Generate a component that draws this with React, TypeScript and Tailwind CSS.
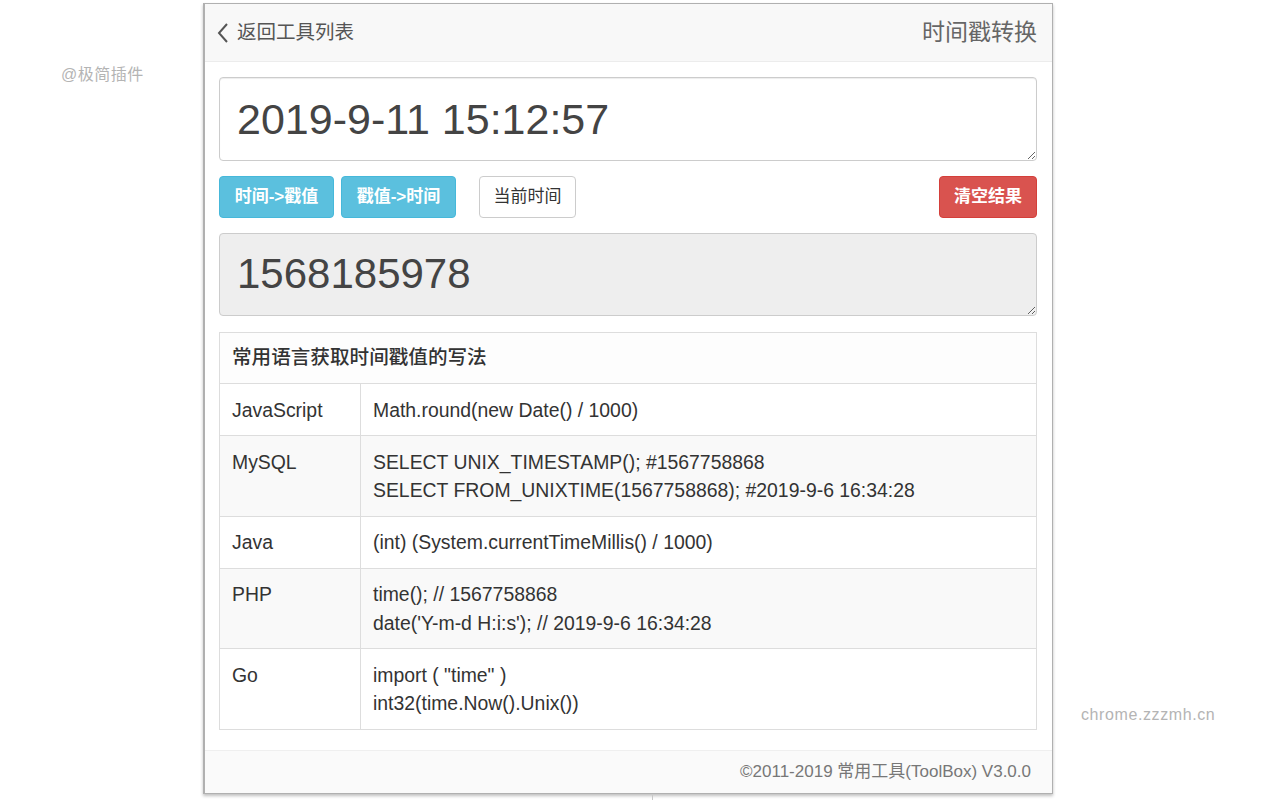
import React from "react";

const rows: { lang: string; code: string[]; striped: boolean }[] = [
  { lang: "JavaScript", code: ["Math.round(new Date() / 1000)"], striped: false },
  {
    lang: "MySQL",
    code: ["SELECT UNIX_TIMESTAMP(); #1567758868", "SELECT FROM_UNIXTIME(1567758868); #2019-9-6 16:34:28"],
    striped: true,
  },
  { lang: "Java", code: ["(int) (System.currentTimeMillis() / 1000)"], striped: false },
  { lang: "PHP", code: ["time(); // 1567758868", "date('Y-m-d H:i:s'); // 2019-9-6 16:34:28"], striped: true },
  { lang: "Go", code: ['import ( "time" )', "int32(time.Now().Unix())"], striped: false },
];

const font = { fontFamily: '"Liberation Sans", "Noto Sans CJK SC", Arial, sans-serif' };

export default function App() {
  return (
    <div className="relative w-[1280px] h-[800px] bg-white overflow-hidden" style={font}>
      <div className="absolute left-[61px] top-[63px] text-[16px] tracking-[0.5px] text-[#b4b4b4]">@极简插件</div>
      <div className="absolute left-[1081px] top-[703px] text-[16px] tracking-[0.6px] text-[#b4b4b4]">chrome.zzzmh.cn</div>
      <div className="absolute left-[652px] top-[795px] w-px h-[5px] bg-[#c8c8c8]" />

      <div className="ml-[203px] pt-[3px]">
        <div className="w-[850px] h-[791px] flex flex-col border border-[#b0b0b0] border-l-2 shadow-[0_2px_3px_rgba(0,0,0,0.25)] bg-white">
          {/* header */}
          <div className="h-[58px] flex items-center justify-between bg-[#f8f8f8] border-b border-[#ececec] pl-[11px] pr-[15px]">
            <div className="flex items-center text-[19.5px] text-[#555]">
              <svg width="14" height="22" viewBox="0 0 14 22" className="mr-[7px]">
                <path d="M11 2 L3 11 L11 20" fill="none" stroke="#555" strokeWidth="2" />
              </svg>
              返回工具列表
            </div>
            <div className="text-[23px] text-[#666]">时间戳转换</div>
          </div>

          {/* body */}
          <div className="flex-1 pl-[14px] pr-[15px] pt-[15px]">
            <textarea
              readOnly
              value="2019-9-11 15:12:57"
              className="block w-full h-[84px] rounded-[4px] border border-[#cccccc] bg-white px-[17px] py-[15px] text-[43px] leading-[52px] text-[#444] outline-none shadow-[inset_0_1px_1px_rgba(0,0,0,0.075)]"
              style={font}
            />
            <div className="mt-[15px] h-[42px] flex items-center">
              <button className="h-[42px] w-[115px] rounded-[4px] bg-[#5bc0de] border border-[#46b8da] text-white text-[17px] font-bold">
                时间-&gt;戳值
              </button>
              <button className="ml-[7px] h-[42px] w-[115px] rounded-[4px] bg-[#5bc0de] border border-[#46b8da] text-white text-[17px] font-bold">
                戳值-&gt;时间
              </button>
              <button className="ml-[23px] h-[42px] w-[97px] rounded-[4px] bg-white border border-[#cccccc] text-[#333] text-[17px]">
                当前时间
              </button>
              <div className="flex-1" />
              <button className="h-[42px] w-[98px] rounded-[4px] bg-[#d9534f] border border-[#d43f3a] text-white text-[17px] font-bold">
                清空结果
              </button>
            </div>
            <textarea
              readOnly
              value="1568185978"
              className="mt-[15px] block w-full h-[83px] rounded-[4px] border border-[#cccccc] bg-[#eeeeee] px-[17px] py-[15px] text-[42px] leading-[50px] text-[#444] outline-none"
              style={font}
            />

            <div className="mt-[16px] border border-[#dddddd]">
              <div className="h-[51px] flex items-center px-[12px] bg-[#fdfdfd] border-b border-[#dddddd] text-[19.6px] font-medium text-[#333]">
                常用语言获取时间戳值的写法
              </div>
              {rows.map((r, i) => (
                <div
                  key={r.lang}
                  className={`flex text-[19.4px] leading-[28.2px] text-[#333] ${i > 0 ? "border-t border-[#dddddd]" : ""} ${
                    r.striped ? "bg-[#f9f9f9]" : "bg-white"
                  }`}
                >
                  <div className="w-[141px] shrink-0 border-r border-[#dddddd] px-[12px] pt-[11.5px] pb-[11.5px]">{r.lang}</div>
                  <div className="flex-1 px-[12px] pt-[11.5px] pb-[11.5px]">
                    {r.code.map((c) => (
                      <div key={c}>{c}</div>
                    ))}
                  </div>
                </div>
              ))}
            </div>
          </div>

          {/* footer */}
          <div className="h-[43px] flex items-center justify-end pr-[21px] bg-[#fafafa] border-t border-[#efefef] text-[17px] text-[#777]">
            ©2011-2019 常用工具(ToolBox) V3.0.0
          </div>
        </div>
      </div>
    </div>
  );
}
